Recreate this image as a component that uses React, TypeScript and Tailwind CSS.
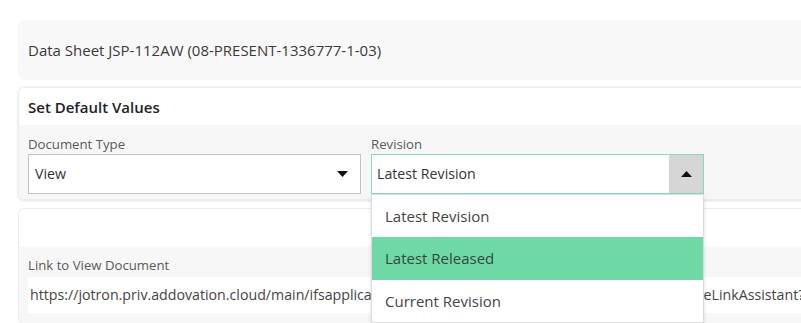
import React from "react";

export default function App() {
  return (
    <div
      className="relative w-[801px] h-[323px] overflow-hidden bg-white text-[#333]"
      style={{ fontFamily: '"Open Sans", "Noto Sans", sans-serif' }}
    >
      <div className="flex flex-col pl-[18px] pt-[20px] gap-[8px]">
        {/* Card 1 */}
        <div className="w-[820px] h-[60px] bg-[#f8f8f8] rounded-l-[6px] flex items-center pl-[10px]">
          <span className="text-[15px] text-[#3a3a3a]">
            Data Sheet JSP-112AW (08-PRESENT-1336777-1-03)
          </span>
        </div>

        {/* Card 2 */}
        <div className="w-[820px] rounded-l-[6px] border border-r-0 border-[#ececec] shadow-[0_1px_3px_rgba(0,0,0,0.12)] overflow-hidden -mt-[1px]">
          <div className="h-[37px] bg-white flex items-center pl-[9px] pt-[2px]">
            <span className="text-[15px] font-semibold text-[#222]">Set Default Values</span>
          </div>
          <div className="bg-[#f7f7f7] h-[74px] flex pl-[9px] pt-[8px] gap-[10px]">
            <div className="flex flex-col w-[333px]">
              <span className="text-[13.2px] text-[#5a5a5a] leading-[20px] pt-[1px]">Document Type</span>
              <div className="h-[40px] bg-white border border-[#c4c4c4] flex items-center justify-between pl-[6px] pr-[12px]">
                <span className="text-[14.2px] text-[#333]">View</span>
                <svg width="11" height="6" viewBox="0 0 11 6">
                  <path d="M0 0 L11 0 L5.5 6 Z" fill="#111" />
                </svg>
              </div>
            </div>
            <div className="relative flex flex-col w-[333px]">
              <span className="text-[13.2px] text-[#5a5a5a] leading-[20px] pt-[1px]">Revision</span>
              <div className="h-[40px] bg-white border border-[#86dcb6] flex items-stretch">
                <div className="flex-1 flex items-center pl-[5px]">
                  <span className="text-[14.2px] text-[#333]">Latest Revision</span>
                </div>
                <div className="w-[34px] bg-[#d6d6d6] flex items-center justify-center">
                  <svg width="11" height="6" viewBox="0 0 11 6">
                    <path d="M0 6 L11 6 L5.5 0 Z" fill="#111" />
                  </svg>
                </div>
              </div>
            </div>
          </div>
        </div>

        {/* Card 3 */}
        <div className="w-[820px] rounded-l-[6px] border border-r-0 border-[#ececec] overflow-hidden">
          <div className="h-[38px] bg-white" />
          <div className="bg-[#f7f7f7] pl-[9px] pt-[8px] pb-[10px]">
            <div className="text-[13.2px] text-[#5a5a5a] leading-[20px]">Link to View Document</div>
            <div className="mt-[2px] h-[36px] bg-white flex items-center pl-[2px] whitespace-nowrap overflow-hidden">
              <span className="text-[14.2px] text-[#444]">
                https://jotron.priv.addovation.cloud/main/ifsapplications/web/assistant/AddovationDocumentFileShareLinkAssistant?
              </span>
            </div>
          </div>
        </div>
      </div>

      {/* Dropdown menu */}
      <div className="absolute left-[371px] top-[194px] w-[333px] bg-white border border-[#dcdcdc] shadow-[0_2px_4px_rgba(0,0,0,0.12)] flex flex-col">
        <div className="h-[42px] flex items-center pl-[13px] text-[15px] text-[#444]">Latest Revision</div>
        <div className="h-[43px] flex items-center pl-[13px] text-[15px] text-[#2f4a3c] bg-[#6fd9a6]">Latest Released</div>
        <div className="h-[42px] flex items-center pl-[13px] text-[15px] text-[#444]">Current Revision</div>
      </div>
    </div>
  );
}
